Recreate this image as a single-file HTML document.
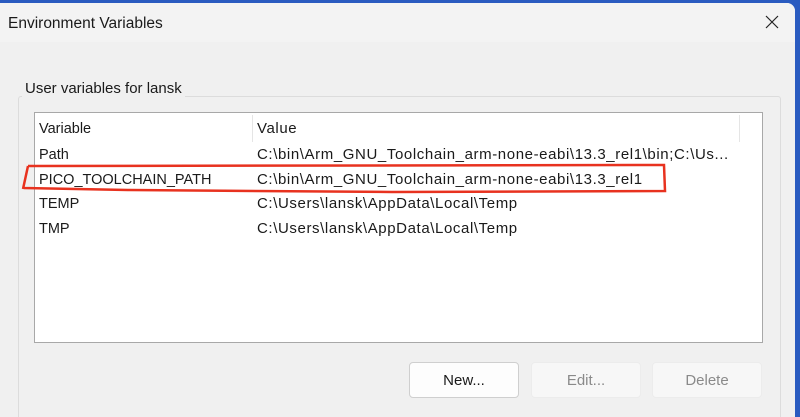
<!DOCTYPE html>
<html><head><style>
html,body{margin:0;width:800px;height:417px;overflow:hidden}
body{background:#2a5bc0;font-family:"Liberation Sans",sans-serif;position:relative}
.win{position:absolute;left:0;top:3px;width:795px;height:414px;background:#f0f0f0;border-top-right-radius:8px;overflow:hidden}
.title{position:absolute;left:0;top:0;width:100%;height:39px;background:#f3f3f3}
.t{position:absolute;font-size:14.5px;color:#1a1a1a;white-space:nowrap}
.v{letter-spacing:0.6px;font-size:15px}
.grp{position:absolute;left:18px;top:93px;width:761px;height:322px;border:1px solid #dcdcdc;border-bottom:none;border-radius:3px 3px 0 0}
.list{position:absolute;left:34px;top:109px;width:729px;height:231px;background:#fff;border:1px solid #a8a8a8;box-sizing:border-box}
.btn{position:absolute;width:110px;height:36px;box-sizing:border-box;border-radius:4px;font-size:15px;text-align:center;line-height:36px}
</style></head><body>
<div class="win">
<div class="title"></div>
<div class="t" style="left:8px;top:12px;font-size:15.5px">Environment Variables</div>
<svg style="position:absolute;left:765px;top:12px" width="14" height="14"><path d="M1 1L13 13M13 1L1 13" stroke="#222" stroke-width="1.2"/></svg>
<div class="grp"></div>
<div class="t" style="left:22px;top:77px;background:#f0f0f0;padding:0 3px;font-size:15px">User variables for lansk</div>
<div class="list">
<div style="position:absolute;left:217px;top:2px;width:1px;height:27px;background:#e5e5e5"></div>
<div style="position:absolute;left:704px;top:2px;width:1px;height:27px;background:#e5e5e5"></div>
</div>
<div class="t" style="left:39px;top:118px">Variable</div><div class="t v" style="left:257px;top:117px">Value</div>
<div class="t" style="left:39px;top:144px">Path</div><div class="t v" style="left:257px;top:143px">C:\bin\Arm_GNU_Toolchain_arm-none-eabi\13.3_rel1\bin;C:\Us...</div>
<div class="t" style="left:39px;top:169px">PICO_TOOLCHAIN_PATH</div><div class="t v" style="left:257px;top:168px">C:\bin\Arm_GNU_Toolchain_arm-none-eabi\13.3_rel1</div>
<div class="t" style="left:39px;top:193px">TEMP</div><div class="t v" style="left:257px;top:192px">C:\Users\lansk\AppData\Local\Temp</div>
<div class="t" style="left:39px;top:218px">TMP</div><div class="t v" style="left:257px;top:217px">C:\Users\lansk\AppData\Local\Temp</div>
<svg style="position:absolute;left:0;top:0" width="800" height="414"><path d="M28 163L664 162L665 188L392 189L130 187L24 185M28 163L23 186" fill="none" stroke="#e8321f" stroke-width="2.5"/></svg>
<div class="btn" style="left:409px;top:359px;background:#fdfdfd;border:1px solid #cfcfcf;color:#1a1a1a">New...</div>
<div class="btn" style="left:531px;top:359px;background:#f7f7f7;border:1px solid #ececec;color:#8a8a8a">Edit...</div>
<div class="btn" style="left:652px;top:359px;background:#f7f7f7;border:1px solid #ececec;color:#8a8a8a">Delete</div>
</div>
</body></html>
